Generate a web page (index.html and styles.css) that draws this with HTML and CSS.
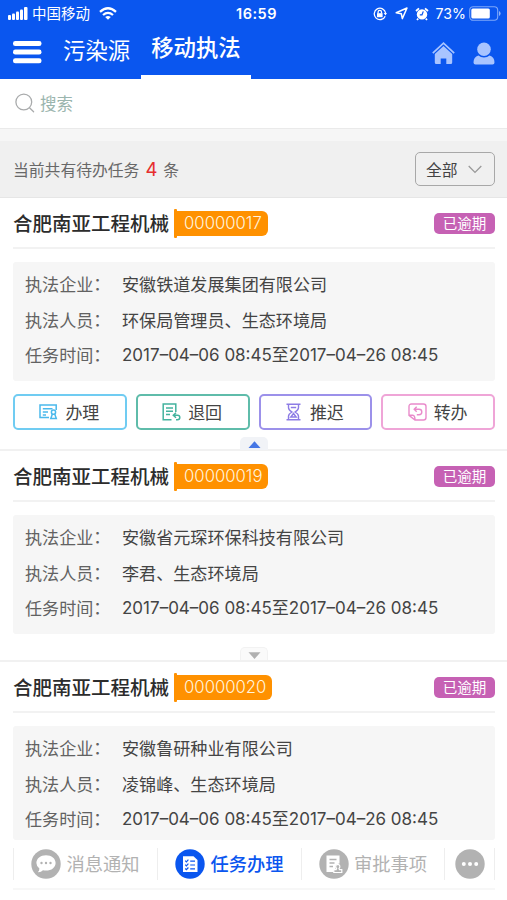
FILE: index.html
```html
<!DOCTYPE html>
<html lang="zh-CN">
<head>
  <meta charset="UTF-8" />
  <meta name="viewport" content="width=device-width, initial-scale=1.0"/>
  <title>移动执法</title>
  <link rel="stylesheet" href="styles.css">
</head>
<body>
  <header class="top-bar">
    <div class="status">
      <div class="status-left">
        <svg class="signal" width="20" height="13" viewBox="0 0 20 13" fill="#fff">
          <rect x="0" y="8" width="3" height="5" rx="1"/><rect x="4" y="6.5" width="3" height="6.5" rx="1"/>
          <rect x="8" y="4.5" width="3" height="8.5" rx="1"/><rect x="12" y="2.5" width="3" height="10.5" rx="1"/>
          <rect x="16" y="0" width="3.5" height="13" rx="1"/>
        </svg>
        <span class="carrier">中国移动</span>
        <svg width="18" height="13" viewBox="0 0 18 13" fill="none" stroke="#fff" stroke-width="2.3">
          <path d="M1 4.8 Q9 -2.2 17 4.8"/><path d="M4 8 Q9 3.7 14 8"/><path d="M6.2 9.9 Q9 7.9 11.8 9.9 L9 12.8Z" fill="#fff" stroke="none"/>
        </svg>
      </div>
      <div class="status-time">16:59</div>
      <div class="status-right">
        <svg width="14" height="14" viewBox="0 0 14 14" fill="none" stroke="#fff" stroke-width="1.3">
          <path d="M12.2 9.2A5.7 5.7 0 1 1 12.6 6"/><path d="M10.7 6h3.3l-1.5 2.4z" fill="#fff" stroke="none"/>
          <rect x="4" y="6.2" width="5.6" height="4" fill="#fff" stroke="none"/><path d="M5.1 6.5V5a1.7 1.7 0 0 1 3.4 0v1.5"/>
        </svg>
        <svg width="13" height="13" viewBox="0 0 13 13" fill="none" stroke="#fff" stroke-width="1.5" stroke-linejoin="round">
          <path d="M12 1L7.3 11.6 6.3 6.7 1.2 5.8Z"/>
        </svg>
        <svg width="14" height="14" viewBox="0 0 14 14">
          <circle cx="7" cy="7.4" r="5.2" fill="#fff"/><path d="M1 4L4 1.3M10 1.3L13 4M3.2 11.7L2 13M10.8 11.7L12 13" stroke="#fff" stroke-width="1.8"/>
          <path d="M8.3 4.4L7 7.8H4.8" fill="none" stroke="#0a56ef" stroke-width="1.2"/>
        </svg>
        <span class="percent">73%</span>
        <svg width="32" height="15" viewBox="0 0 32 15">
          <rect x=".7" y=".7" width="28" height="13.6" rx="3.5" fill="none" stroke="#7ea8fa" stroke-width="1.1"/>
          <rect x="2.3" y="2.5" width="18.5" height="10" rx="1.5" fill="#fff"/><path d="M30 5v5q1.6-.8 1.6-2.5T30 5z" fill="#8db2fb"/>
        </svg>
      </div>
    </div>
    <nav class="nav">
      <svg class="menu-icon" width="29" height="24" viewBox="0 0 29 24" fill="#fff">
        <rect y="1" width="28.5" height="5" rx="2.3"/><rect y="9.6" width="28.5" height="5" rx="2.3"/><rect y="18.2" width="28.5" height="5" rx="2.3"/>
      </svg>
      <a class="tab">污染源</a>
      <a class="tab active">移动执法</a>
      <div class="nav-icons">
        <svg width="23" height="23" viewBox="0 0 23 23">
          <path d="M.8 11.2L11.5 1.2 22.2 11.2" fill="none" stroke="#a8c4ff" stroke-width="1.7"/>
          <path d="M2.8 12L11.5 4 20.2 12V20.5q0 1.5-1.5 1.5H14.3V16.5H8.7V22H4.3q-1.5 0-1.5-1.5z" fill="#a8c4ff"/>
        </svg>
        <svg width="22" height="23" viewBox="0 0 22 23" fill="#a8c4ff">
          <circle cx="11" cy="7.3" r="6.8"/><path d="M.5 20.5Q.5 15 5.4 13.6Q7.7 15.6 11 15.6T16.6 13.6Q21.5 15 21.5 20.5Q21.5 22.5 19.5 22.5H2.5Q.5 22.5 .5 20.5z"/>
        </svg>
      </div>
    </nav>
  </header>

  <div class="search">
    <svg width="20" height="20" viewBox="0 0 20 20" fill="none" stroke="#a9abac" stroke-width="1.3" stroke-linecap="round">
      <circle cx="8.8" cy="9" r="7.9"/><path d="M14.5 14.8L18.6 18.8"/>
    </svg>
    <span>搜索</span>
  </div>

  <div class="filter">
    <div class="filter-text">当前共有待办任务<b>4</b>条</div>
    <div class="select">全部
      <svg width="14" height="9" viewBox="0 0 14 9" fill="none" stroke="#999" stroke-width="1.3"><path d="M.7 1L7 7.4 13.3 1"/></svg>
    </div>
  </div>

  <main>
    <section class="card open">
      <div class="card-head">
        <h2>合肥南亚工程机械</h2><span class="tag">00000017</span><span class="overdue">已逾期</span>
      </div>
      <div class="details">
        <div class="row"><label>执法企业<i>：</i></label><span>安徽铁道发展集团有限公司</span></div>
        <div class="row"><label>执法人员<i>：</i></label><span>环保局管理员、生态环境局</span></div>
        <div class="row"><label>任务时间<i>：</i></label><span class="date">2017–04–06 08:45至2017–04–26 08:45</span></div>
      </div>
      <div class="actions">
        <button class="btn blue">
          <svg width="19" height="18" viewBox="0 0 19 18" fill="none" stroke="#4bb9ec" stroke-width="1.5">
            <path d="M17.2 7V2H1V14.6H10M3.8 5.7H13.5M3.8 9H9M3.8 12H7"/><circle cx="14.5" cy="9.2" r="2.1"/><path d="M13.3 11.3L11.8 15.5H17.3L15.8 11.3"/>
          </svg>办理</button>
        <button class="btn green">
          <svg width="19" height="18" viewBox="0 0 19 18" fill="none" stroke="#43b39e" stroke-width="1.5">
            <path d="M13.8 9V1H1.2V16.7H9.5M4 5H11M4 8.3H11M4 11.5H8M14 9.8L11.3 12.3 14 14.8M11.5 12.3H15.5Q17.8 12.3 17.8 14.5T15.5 16.7H14"/>
          </svg>退回</button>
        <button class="btn violet">
          <svg width="15" height="18" viewBox="0 0 15 18" fill="none" stroke="#8d7ce5" stroke-width="1.4">
            <path d="M.5 1.3H14.5M.5 16.7H14.5M2.5 1.5V4.7Q2.5 7 6 9Q2.5 11 2.5 13.3V16.5M12.5 1.5V4.7Q12.5 7 9 9Q12.5 11 12.5 13.3V16.5M4.8 4.5H10.2M7.5 10.5L4.8 14H10.2Z"/>
          </svg>推迟</button>
        <button class="btn pink">
          <svg width="19" height="18" viewBox="0 0 19 18" fill="none" stroke="#e98bcb" stroke-width="1.4">
            <path d="M3.5 1H15.5Q18 1 18 3.5V14.5Q18 17 15.5 17H7L1 12.3V3.5Q1 1 3.5 1M1 12.3H4.8Q7 12.5 7 17M8.7 3.8L6.2 6.3 8.7 8.8M6.4 6.3H11Q13.8 6.3 13.8 9T11 11.7H8.8"/>
          </svg>转办</button>
      </div>
      <div class="toggle"><svg width="13" height="7" viewBox="0 0 13 7" fill="#4677e5"><path d="M.5 7L6.5 .3 12.5 7z"/></svg></div>
    </section>

    <section class="card closed">
      <div class="card-head">
        <h2>合肥南亚工程机械</h2><span class="tag">00000019</span><span class="overdue">已逾期</span>
      </div>
      <div class="details">
        <div class="row"><label>执法企业<i>：</i></label><span>安徽省元琛环保科技有限公司</span></div>
        <div class="row"><label>执法人员<i>：</i></label><span>李君、生态环境局</span></div>
        <div class="row"><label>任务时间<i>：</i></label><span class="date">2017–04–06 08:45至2017–04–26 08:45</span></div>
      </div>
      <div class="toggle"><svg width="13" height="7" viewBox="0 0 13 7" fill="#b0b0b0"><path d="M.5 .3H12.5L6.5 7z"/></svg></div>
    </section>

    <section class="card last">
      <div class="card-head">
        <h2>合肥南亚工程机械</h2><span class="tag">00000020</span><span class="overdue">已逾期</span>
      </div>
      <div class="details">
        <div class="row"><label>执法企业<i>：</i></label><span>安徽鲁研种业有限公司</span></div>
        <div class="row"><label>执法人员<i>：</i></label><span>凌锦峰、生态环境局</span></div>
        <div class="row"><label>任务时间<i>：</i></label><span class="date">2017–04–06 08:45至2017–04–26 08:45</span></div>
      </div>
    </section>
  </main>

  <footer class="tab-bar">
    <a class="item first">
      <svg width="30" height="30" viewBox="0 0 30 30">
        <circle cx="15" cy="15" r="14.7" fill="#b2b2b2"/><path d="M15 6.2c5.5 0 9.6 3.4 9.6 7.7s-4.1 7.7-9.6 7.7q-1.6 0-3-.4-2.2 2.2-5.2 1.9 1.6-1.4 1.6-3.7-3-2.1-3-5.5c0-4.3 4.1-7.7 9.6-7.7z" fill="#fff"/>
        <g fill="#b2b2b2"><circle cx="10.5" cy="14" r="1.2"/><circle cx="15" cy="14" r="1.2"/><circle cx="19.5" cy="14" r="1.2"/></g>
      </svg><span>消息通知</span></a>
    <a class="item current">
      <svg width="30" height="30" viewBox="0 0 30 30">
        <circle cx="15" cy="15" r="14.7" fill="#0a56ef"/><path d="M8 7.2H18.5L22.5 11V23H8z" fill="#fff"/>
        <path d="M10.2 11.7l1.2 1.2 2-2.2M10.2 15.7l1.2 1.2 2-2.2M10.2 19.5l1.2 1.2 2-2.2M15.2 12.2H20M15.2 16H20M15.2 19.8H20" fill="none" stroke="#0a56ef" stroke-width="1.2"/>
      </svg><span>任务办理</span></a>
    <a class="item">
      <svg width="30" height="30" viewBox="0 0 30 30">
        <circle cx="15" cy="15" r="14.7" fill="#b2b2b2"/><path d="M7.5 6.5H20.5V14.5Q15.5 15 16.8 19L14.5 23H7.5z" fill="#fff"/>
        <path d="M10.5 10.5H17.5M10.5 14H15.5M10.5 17.5H14" stroke="#b2b2b2" stroke-width="1.3"/>
        <path d="M18.8 15.3a2.3 2.3 0 0 1 1.2 4.1l.5 1.2h2.3v2.9h-8v-2.9h2.3l.5-1.2a2.3 2.3 0 0 1 1.2-4.1z" fill="#b2b2b2" stroke="#fff" stroke-width="1.2"/>
      </svg><span>审批事项</span></a>
    <a class="item more">
      <svg width="30" height="30" viewBox="0 0 30 30">
        <circle cx="15" cy="15" r="14.7" fill="#b2b2b2"/><g fill="#fff"><circle cx="8.8" cy="15" r="2"/><circle cx="15" cy="15" r="2"/><circle cx="21.2" cy="15" r="2"/></g>
      </svg></a>
  </footer>
</body>
</html>
```
FILE: styles.css
```css
* {
  box-sizing: border-box;
}

body {
  margin: 0;
  height: 900px;
  overflow: hidden;
  font-family: Inter, "Noto Sans CJK SC", sans-serif;
  background-color: #fff;
  color: #444;
}

svg {
  display: block;
  flex: none;
}

.top-bar {
  height: 79px;
  background-color: #0a56ef;
  color: #fff;
}

.status {
  height: 27px;
  display: grid;
  grid-template-columns: 1fr auto 1fr;
  align-items: center;
  padding: 0 6px 0 8px;
}

.status-left,
.status-right {
  display: flex;
  align-items: center;
}

.carrier {
  font-size: 14.5px;
  line-height: 26px;
  margin: 0 9px 0 4px;
}

.status-time {
  padding-left: 4px;
  font-size: 14.5px;
  font-weight: 600;
  letter-spacing: 0.5px;
}

.status-right {
  justify-content: flex-end;
  gap: 7px;
}

.status-right svg:first-child {
  margin-right: 1px;
}

.percent {
  font-size: 14.2px;
  margin-right: -4px;
}

.nav {
  height: 52px;
  display: flex;
  padding-left: 13px;
  padding-right: 12px;
}

.menu-icon {
  margin: 13px 21px 0 0;
}

.tab {
  font-size: 22.4px;
  line-height: 47px;
  margin-right: 11px;
}

.tab.active {
  height: 52px;
  line-height: 42px;
  padding: 0 10px;
  font-weight: 500;
  border-bottom: 4px solid #fff;
}

.nav-icons {
  display: flex;
  gap: 18px;
  margin: 15px 0 0 auto;
}

.search {
  height: 50px;
  display: flex;
  align-items: center;
  gap: 5px;
  padding: 0 0 1px 15px;
  border-bottom: 1px solid #eaeaea;
  font-size: 16.5px;
  color: #9bb5ae;
}

.filter {
  height: 69px;
  display: flex;
  align-items: center;
  justify-content: space-between;
  padding: 0 12px 0 13px;
  border-top: 12px solid #f6f6f6;
  border-bottom: 1px solid #e6e6e6;
  background-color: #f0f0f0;
}

.filter-text {
  font-size: 15.8px;
  color: #686868;
}

.filter-text b {
  margin: 0 6px;
  font-size: 18.5px;
  font-weight: 400;
  color: #e62e2e;
}

.select {
  width: 80px;
  height: 34px;
  display: flex;
  align-items: center;
  justify-content: space-between;
  padding: 0 12px 0 10px;
  border: 1px solid #a8a8a8;
  border-radius: 5px;
  font-size: 15.8px;
  color: #444;
}

.card {
  padding: 0 12px 0 13px;
  border-bottom: 2px solid #f1f1f1;
}

.card.open {
  height: 253px;
}

.card.closed {
  height: 211px;
}

.card.last {
  height: 178px;
  border-bottom: 0;
}

.card-head {
  height: 51px;
  padding-top: 1px;
  display: flex;
  align-items: center;
  border-bottom: 2px solid #f2f2f2;
}

.card-head h2 {
  margin: 0;
  padding-top: 1px;
  font-size: 19.5px;
  line-height: 28px;
  font-weight: 500;
  color: #2c2c2c;
}

.tag {
  height: 25px;
  margin-left: 6px;
  padding: 0 6px 0 9px;
  position: relative;
  background-color: #ff9100;
  border-radius: 0 6px 6px 0;
  color: #fff4df;
  font-size: 16.7px;
  font-weight: 300;
  line-height: 25px;
}

/* flag pole */
.tag::before {
  content: "";
  position: absolute;
  left: -1px;
  top: -2px;
  width: 3px;
  height: 29px;
  border-radius: 1px;
  background-color: #ff9100;
}

.overdue {
  width: 61px;
  height: 21px;
  margin-left: auto;
  border-radius: 5px;
  background-color: #c661b4;
  color: #fff;
  font-size: 14.5px;
  line-height: 21px;
  text-align: center;
}

.details {
  height: 119px;
  margin-top: 13px;
  padding: 5px 13px 0 12px;
  border-radius: 3px;
  background-color: #f6f6f6;
  font-size: 17.1px;
  line-height: 35px;
}

.last .details {
  height: 114px;
}

.row {
  display: flex;
  height: 35.5px;
  white-space: nowrap;
}

.row label {
  width: 97px;
  color: #626262;
}

/* half-width centred colon */
.row i {
  display: inline-block;
  font-family: "Noto Sans CJK TC", sans-serif;
  font-style: normal;
  font-feature-settings: "halt";
  line-height: 1;
}

.date {
  font-size: 17px;
}

.actions {
  display: grid;
  grid-template-columns: repeat(4, 1fr);
  gap: 9px;
  margin-top: 13px;
}

.btn {
  height: 36px;
  display: flex;
  align-items: center;
  justify-content: center;
  gap: 7px;
  padding: 0 1px 2px 0;
  border: 2px solid;
  border-radius: 5px;
  background-color: #fff;
  color: #444;
  font-family: inherit;
  font-size: 17px;
}

.btn svg {
  margin-top: 2px;
}

.btn.violet {
  gap: 9px;
}

.btn.blue {
  border-color: #70ccf2;
}

.btn.green {
  border-color: #5fbcaa;
}

.btn.violet {
  border-color: #9c91ea;
}

.btn.pink {
  border-color: #efa5d7;
}

.toggle {
  width: 28px;
  height: 13px;
  margin: 7px auto 0;
  padding-top: 4px;
  display: flex;
  justify-content: center;
  border-radius: 5px 5px 0 0;
  background-color: #f1f3f7;
}

.closed .toggle {
  margin-top: 13px;
  border: 1px solid #f2f2f2;
  border-bottom: 0;
  background-color: #fafafa;
}

.tab-bar {
  height: 50px;
  margin: 0 12px 0 13px;
  display: grid;
  grid-template-columns: 145px 144px 143px 50px;
  align-items: center;
  border-bottom: 2px solid #f7f7f7;
}

.item {
  height: 32px;
  display: flex;
  align-items: center;
  justify-content: center;
  gap: 5px;
  border-right: 1px solid #eee;
  color: #b2b2b2;
  font-size: 18.3px;
}

.item span {
  padding-bottom: 2px;
}

.item.first {
  border-left: 1px solid #eee;
}

.item.current {
  color: #0a56ef;
  font-weight: 500;
}
```
